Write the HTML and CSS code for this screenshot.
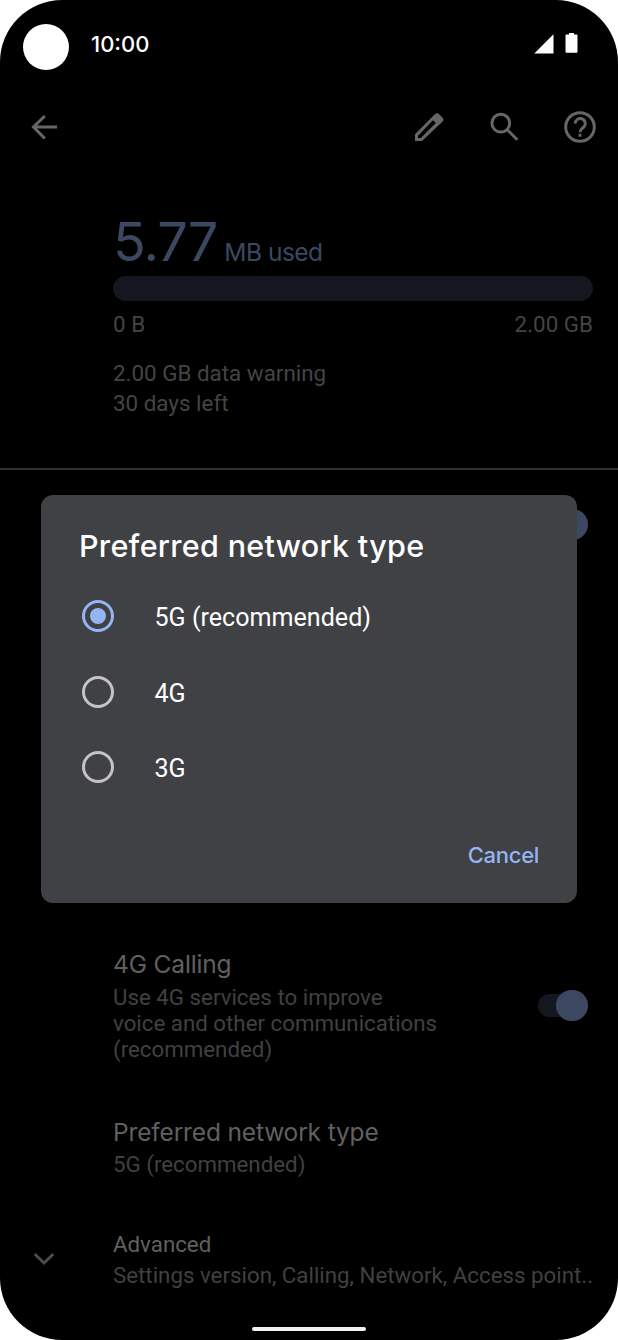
FILE: index.html
```html
<!DOCTYPE html>
<html lang="en">
<head>
<meta charset="utf-8">
<title>Mobile network</title>
<link rel="stylesheet" href="styles.css">
</head>
<body>
<div class="phone">
  <header class="status">
    <span class="camera"></span>
    <span class="clock"><span class="t-clock">10:00</span></span>
    <svg class="signal" width="20" height="20" viewBox="0 0 20 20"><path d="M19.5 0.3V19.5H0.3Z"/></svg>
    <svg class="battery" width="13" height="20" viewBox="0 0 13 20"><path d="M4 0h5v1.500h2.400q1.100 0 1.100 1.100v16.100q0 1.100-1.100 1.100H1.600q-1.100 0-1.100-1.100V2.600q0-1.100 1.100-1.100H4Z"/></svg>
  </header>
  <nav class="appbar">
    <svg class="icon line" viewBox="0 0 38 38"><path d="M32 19H8.500M19.800 8L8.500 19L19.800 30.500"/></svg>
    <span class="grow"></span>
    <svg class="icon" viewBox="0 0 38 38"><path fill-rule="evenodd" d="M5 33V26.300L24.800 6.200q2.200-2 4.400 0l3.200 3.200q2 2.200 0 4.400L12 33ZM8 30v-2.300L23 12.300l2.800 2.800L10.800 30Z"/></svg>
    <svg class="icon line" viewBox="0 0 38 38"><circle cx="15.800" cy="15.200" r="8.900"/><path d="M22 21.500L32.300 31.800"/></svg>
    <svg class="icon line" viewBox="0 0 38 38"><circle cx="19" cy="19" r="14.300"/><path d="M14.300 15.700a5 5 0 1 1 8.600 3.200C21 20.800 19 21.300 19 24.300M19 25.700v3"/></svg>
  </nav>
  <section class="usage">
    <div class="amount"><span class="num">5.77</span><span class="unit">MB used</span></div>
    <div class="bar"></div>
    <div class="scale"><span>0 B</span><span>2.00 GB</span></div>
    <div class="notes"><div>2.00 GB data warning</div><div>30 days left</div></div>
  </section>
  <main class="list">
    <div class="row row-data"><span class="toggle"><span class="thumb"></span></span></div>
    <div class="row row-calling">
      <div class="text">
        <div class="title"><span class="t-calling">4G Calling</span></div>
        <div class="sub">Use 4G services to improve<br>voice and other communications<br>(recommended)</div>
      </div>
      <span class="toggle"><span class="thumb"></span></span>
    </div>
    <div class="row row-type">
      <div class="text">
        <div class="title"><span class="t-type">Preferred network type</span></div>
        <div class="sub">5G (recommended)</div>
      </div>
    </div>
    <div class="row row-advanced">
      <svg class="chevron" width="22" height="14" viewBox="0 0 22 14"><path d="M1.700 2L11 11L20.300 2"/></svg>
      <div class="text">
        <div class="adv">Advanced</div>
        <div class="adv-sub">Settings version, Calling, Network, Access point..</div>
      </div>
    </div>
  </main>
  <footer class="home"><span class="handle"></span></footer>
  <div class="dialog" role="dialog">
    <h1 class="heading"><span class="t-heading">Preferred network type</span></h1>
    <div class="option"><span class="radio on"></span><span class="label">5G (recommended)</span></div>
    <div class="option"><span class="radio"></span><span class="label">4G</span></div>
    <div class="option"><span class="radio"></span><span class="label">3G</span></div>
    <div class="actions"><span class="cancel">Cancel</span></div>
  </div>
</div>
</body>
</html>
```
FILE: styles.css
```css
* { box-sizing: border-box; }
body { margin: 0; background: #fff; font-family: Roboto, sans-serif; }
.phone { position: relative; width: 618px; height: 1340px; background: #000; border-radius: 62px; overflow: hidden; display: flex; flex-direction: column; }
.grow { flex: 1; }

.status { display: flex; align-items: flex-start; height: 88px; padding: 24px 40px 0 23px; color: #fff; }
.camera { width: 46px; height: 46px; border-radius: 50%; background: #fff; }
.clock { flex: 1; margin-left: 22px; font: 500 22px/26px Inter, sans-serif; padding-top: 7.400px; }
.t-clock { letter-spacing: 0; }
.signal { fill: #fff; margin: 9.500px 11.500px 0 0; }
.battery { fill: #fff; margin-top: 9px; }

.appbar { display: flex; align-items: center; height: 78px; padding: 0 19px 0 24.500px; gap: 37.700px; }
.icon { width: 38px; height: 38px; fill: #666; flex: none; }
.line { fill: none; stroke: #666; stroke-width: 3; }

.usage { height: 301.500px; padding: 45px 25px 0 113px; }
.amount { display: flex; align-items: baseline; height: 60px; color: #3c4861; font-family: Inter, sans-serif; padding-top: 1px; }
.num { font-size: 54px; line-height: 60px; letter-spacing: -1px; }
.unit { font-size: 24.500px; line-height: 30px; letter-spacing: -0.5px; margin-left: 7px; }
.bar { height: 25px; margin-top: 5px; border-radius: 12.500px; background: #14171f; }
.scale { display: flex; justify-content: space-between; margin-top: 9.500px; font-size: 22.400px; line-height: 26px; color: #444; }
.notes { margin-top: 21px; font-size: 22.400px; line-height: 30.200px; color: #444; }

.list { height: 849px; border-top: 2px solid #303030; display: flex; flex-direction: column; }
.row { display: flex; flex: none; padding: 0 25px 0 113px; align-items: center; }
.row-data { height: 110px; justify-content: flex-end; }
.row-calling { margin-top: 369px; height: 114px; }
.row-type { margin-top: 53px; height: 62px; }
.row-advanced { margin-top: 51.500px; height: 62px; padding-left: 33px; }
.text { flex: 1; min-width: 0; }
.title { font: 400 24.500px/32px Inter, sans-serif; color: #606060; }
.t-calling { letter-spacing: -0.15px; }
.t-type { letter-spacing: -0.15px; }
.sub { margin-top: 3.300px; font-size: 22.300px; line-height: 26.300px; color: #404040; white-space: nowrap; }
.adv { font-size: 22.300px; line-height: 31px; color: #606060; }
.adv-sub { font-size: 22.300px; line-height: 31px; color: #404040; white-space: nowrap; }
.chevron { margin: 0 58px 3px 0; fill: none; stroke: #4c4c4c; stroke-width: 3; }
.toggle { display: flex; justify-content: flex-end; align-items: center; width: 50px; height: 23px; margin-right: 5.500px; border-radius: 12px; background: #14171f; }
.thumb { width: 31.500px; height: 31.500px; border-radius: 50%; background: #3c4861; flex: none; }

.home { display: flex; justify-content: center; padding-top: 10px; }
.handle { width: 114px; height: 4px; border-radius: 2px; background: #f1f1f1; }

.dialog { position: absolute; left: 41px; top: 494.500px; width: 536px; height: 408.500px; border-radius: 12px; background: #404144; color: #fff; padding: 31.500px 38px 0; }
.heading { margin: 0; font: 500 30.500px/40px Inter, sans-serif; white-space: nowrap; }
.t-heading { letter-spacing: 0.300px; }
.option { display: flex; align-items: center; height: 75.700px; }
.heading + .option { margin-top: 12px; }
.radio { width: 32px; height: 32px; margin-left: 2.500px; border: 3px solid #c4c4c5; border-radius: 50%; display: flex; align-items: center; justify-content: center; }
.on { border-color: #94b4f5; }
.on::before { content: ""; width: 16px; height: 16px; border-radius: 50%; background: #94b4f5; }
.label { margin-left: 41px; padding-top: 3px; font-size: 25.100px; }
.actions { display: flex; justify-content: flex-end; margin-top: 35px; }
.cancel { font: 500 22px/30px Inter, sans-serif; letter-spacing: -0.3px; color: #94b4f5; }
```
